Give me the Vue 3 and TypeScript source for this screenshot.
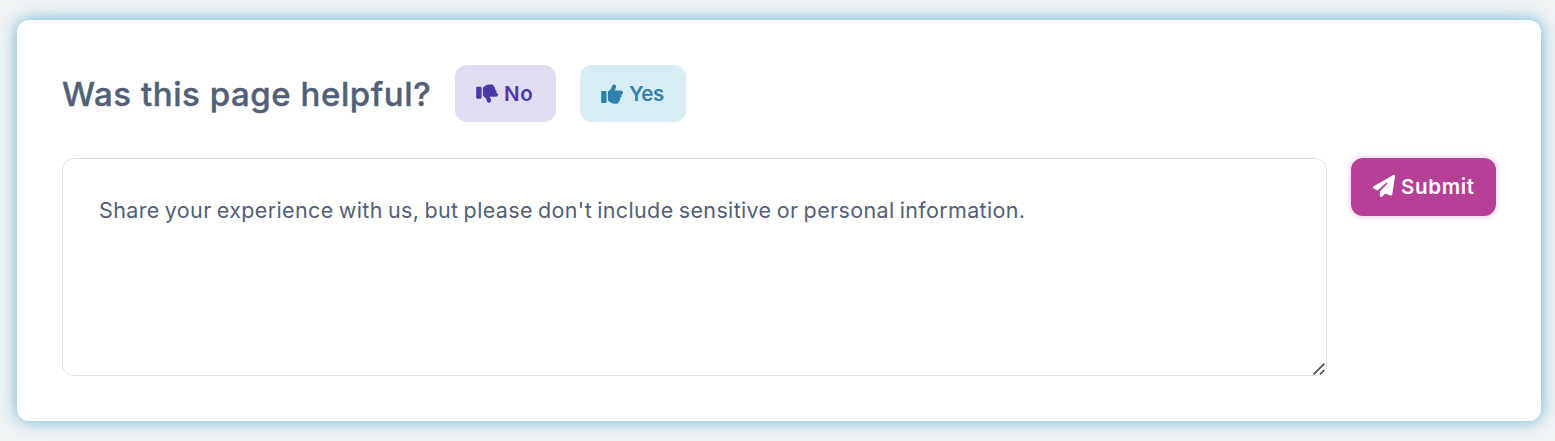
<script setup lang="ts">
import { ref } from 'vue'

const feedback = ref<string>('')
const helpful = ref<boolean | null>(null)
const hand =
  'M512 224.1c0-26.5-21.48-47.98-48-47.98h-146.5c22.77-37.91 34.52-80.88 34.52-96.02C352 56.52 333.5 32 302.5 32c-63.13 0-26.36 76.15-108.2 141.6L178 186.6C166.2 196.1 160.2 210 160.1 224L160 384c0 15.1 7.113 29.33 19.2 38.39l34.14 25.59C241 468.8 274.7 480 309.3 480H368c26.52 0 48-21.47 48-47.98c0-3.635-.4805-7.143-1.246-10.55C434 415.2 448 397.4 448 376c0-9.148-2.697-17.61-7.139-24.88C463.1 347 480 327.5 480 304.1c0-12.5-4.893-23.78-12.72-32.32C492.2 270.1 512 249.5 512 224.1z'
</script>

<template>
  <main class="page">
    <section class="card">
      <div class="question">
        <h2>Was this page helpful?</h2>
        <button class="btn no" type="button" @click="helpful = false">
          <svg class="icon" viewBox="0 0 512 512">
            <rect x="4" y="88" width="126" height="276" rx="24" />
            <path :d="hand" transform="matrix(1 0 0 -.95 0 488)" />
          </svg>
          <span>No</span>
        </button>
        <button class="btn yes" type="button" @click="helpful = true">
          <svg class="icon" viewBox="0 0 512 512">
            <rect x="4" y="188" width="126" height="276" rx="24" />
            <path :d="hand" />
          </svg>
          <span>Yes</span>
        </button>
      </div>
      <form class="feedback" @submit.prevent>
        <div class="field">
          <textarea
            v-model="feedback"
            placeholder="Share your experience with us, but please don't include sensitive or personal information."
          ></textarea>
          <svg class="grip" viewBox="0 0 12 12"><path d="M.7 11.3 11.3 .7M7 11.3 11.3 7" /></svg>
        </div>
        <button class="btn submit" type="submit">
          <svg class="icon" viewBox="0 0 512 512">
            <path d="M498.1 5.6c10.1 7 15.4 19.1 13.5 31.2l-64 416c-1.5 9.7-7.4 18.2-16 23s-18.9 5.4-28 1.6L284 427.7l-68.5 74.1c-8.9 9.7-22.9 12.9-35.2 8.1S160 493.2 160 480V396.4c0-4 1.5-7.8 4.2-10.7L331.8 202.8c5.8-6.3 5.6-16-.4-22s-15.7-6.4-22-.7L106 360.8 17.7 316.6C7.1 311.3 .3 300.7 0 288.9s5.9-22.8 16.1-28.7l448-256c10.7-6.1 23.9-5.5 34 1.4z" />
          </svg>
          <span>Submit</span>
        </button>
      </form>
    </section>
  </main>
</template>

<style>
body {
  margin: 0;
  background: #f0f4f5;
}
</style>

<style scoped>
.page {
  box-sizing: border-box;
  height: 441px;
  padding: 20px 14px 20px 17px;
  overflow: hidden;
  background: #f0f4f5;
  font-family: Inter, "Noto Sans", sans-serif;
}
.card {
  box-sizing: border-box;
  height: 401px;
  padding: 45px;
  border-radius: 12px;
  background: #fff;
  box-shadow: 0 0 15px rgba(60, 164, 208, 0.72), 0 0 34px rgba(100, 130, 150, 0.1);
}
.question {
  display: flex;
  align-items: center;
  height: 57px;
}
h2 {
  width: 393px;
  margin: 0;
  padding-top: 2px;
  color: #526077;
  font-size: 33px;
  font-weight: 500;
  line-height: 55px;
  letter-spacing: 0.56px;
  white-space: nowrap;
  -webkit-text-stroke: 0.4px #526077;
}
.btn {
  display: flex;
  flex: none;
  align-items: center;
  box-sizing: border-box;
  height: 57px;
  padding: 0 0 0 21px;
  border: 0;
  border-radius: 12px;
  font-family: inherit;
  font-size: 20.5px;
  font-weight: 600;
  white-space: nowrap;
}
.icon {
  flex: none;
  width: 22px;
  height: 22px;
  margin-right: 6px;
  fill: currentColor;
}
.no {
  width: 101px;
  background: #e0dcf1;
  color: #4a3aa7;
}
.no span {
  letter-spacing: 0.8px;
}
.yes {
  width: 106px;
  margin-left: 24px;
  background: #d8ecf5;
  color: #2e82ab;
}
.yes span {
  letter-spacing: -0.3px;
}
.feedback {
  display: flex;
  align-items: flex-start;
  gap: 24px;
  margin-top: 36px;
}
.field {
  position: relative;
  width: 1265px;
  height: 218px;
}
textarea {
  display: block;
  box-sizing: border-box;
  width: 100%;
  height: 100%;
  margin: 0;
  padding: 34px 36px;
  border: 1px solid #dedfe3;
  border-radius: 12px;
  outline: 0;
  background: #fff;
  color: #526077;
  font-family: inherit;
  font-size: 21.5px;
  font-weight: 400;
  line-height: 34px;
  letter-spacing: 0.355px;
  word-spacing: -1.2px;
  resize: none;
}
textarea::placeholder {
  color: #526077;
  opacity: 1;
}
.grip {
  position: absolute;
  right: 2px;
  bottom: 1px;
  width: 12px;
  height: 12px;
  fill: none;
  stroke: #505050;
  stroke-width: 1.7;
  pointer-events: none;
}
.submit {
  width: 145px;
  height: 58px;
  padding-left: 22px;
  background: #b64095;
  color: #fff;
  box-shadow: 0 0 7px rgba(182, 64, 149, 0.35);
}
.submit .icon {
  margin-top: -2px;
}
.submit span {
  letter-spacing: 0.65px;
  line-height: 24px;
  padding-bottom: 1px;
}
</style>
